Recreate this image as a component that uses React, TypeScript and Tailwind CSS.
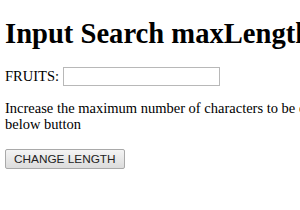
export default function App() {
  return (
    <div className="w-[300px] h-[210px] overflow-hidden bg-white text-black font-['Liberation_Serif',serif]">
      <div className="w-[520px] px-[5px] pt-[1px]">
        <h1 className="text-[28.6px] font-bold leading-[33px] mt-[16px] mb-[17px] whitespace-nowrap">
          Input Search maxLength
        </h1>
        <div className="flex items-center text-[14.5px] leading-[17px]">
          <label htmlFor="fruits" className="mr-[4px]">FRUITS:</label>
          <input
            id="fruits"
            type="search"
            maxLength={5}
            className="w-[157px] h-[19px] border border-[#b8b8b8] bg-white outline-none px-1"
          />
        </div>
        <p className="text-[14.5px] leading-[16px] mt-[14px] mb-[14px]">
          Increase the maximum number of characters to be entered in the input field using the
          <br />
          below button
        </p>
        <button className="h-[20px] px-[8px] border border-[#a9a9a9] rounded-[2px] bg-gradient-to-b from-[#f4f4f4] to-[#dcdcdc] text-[11.8px] leading-[18px] text-[#222] font-['Liberation_Sans',sans-serif]">
          CHANGE LENGTH
        </button>
      </div>
    </div>
  );
}
